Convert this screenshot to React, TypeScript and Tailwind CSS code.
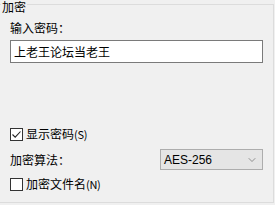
import { ChevronDown } from 'lucide-react';

const font = { fontFamily: '"Noto Sans CJK SC", "Noto Sans", sans-serif' };

function CheckBox({ checked, label, hint }: { checked: boolean; label: string; hint: string }) {
  return (
    <div className="flex items-center h-[16px]">
      <span className="w-[13px] h-[13px] border border-[#333] bg-white flex items-center justify-center">
        {checked && (
          <svg width="11" height="11" viewBox="0 0 11 11">
            <path d="M1.5 5.5 L4.2 8.2 L9.5 2.5" fill="none" stroke="#222" strokeWidth="1.1" />
          </svg>
        )}
      </span>
      <span className="ml-[3px] text-[12px] leading-[16px] text-black">
        {label}
        <span className="text-[11px] tracking-[-0.3px]">{hint}</span>
      </span>
    </div>
  );
}

export default function App() {
  return (
    <div className="relative w-[275px] h-[205px] bg-[#f0f0f0] overflow-hidden" style={font}>
      <div className="mt-[4px] w-[274px] h-[199px] border-t border-r border-b border-[#dcdcdc] pl-[10px]">
        <div className="mt-[15px] text-[12px] leading-[16px] text-black">输入密码：</div>
        <div className="mt-[4px] w-[253px] h-[23px] border border-[#7a7a7a] bg-white pl-[3px] flex items-center text-[12px] text-black">
          上老王论坛当老王
        </div>
        <div className="mt-[63px]">
          <CheckBox checked label="显示密码" hint="(S)" />
        </div>
        <div className="mt-[7px] flex items-center h-[21px]">
          <span className="w-[150px] text-[12px] leading-[16px] text-black">加密算法：</span>
          <div className="w-[103px] h-[21px] border border-[#adadad] bg-[#e5e5e5] flex items-center justify-between pl-[3px] pr-[4px]">
            <span className="text-[12px] leading-[16px] text-black" style={{ fontFamily: '"Liberation Sans", sans-serif' }}>AES-256</span>
            <ChevronDown className="w-[12px] h-[12px] text-[#555]" strokeWidth={1.2} />
          </div>
        </div>
        <div className="mt-[6px]">
          <CheckBox checked={false} label="加密文件名" hint="(N)" />
        </div>
      </div>
      <span className="absolute left-[1px] top-0 px-[1px] bg-[#f0f0f0] text-[12px] leading-[14px] text-black">加密</span>
    </div>
  );
}
